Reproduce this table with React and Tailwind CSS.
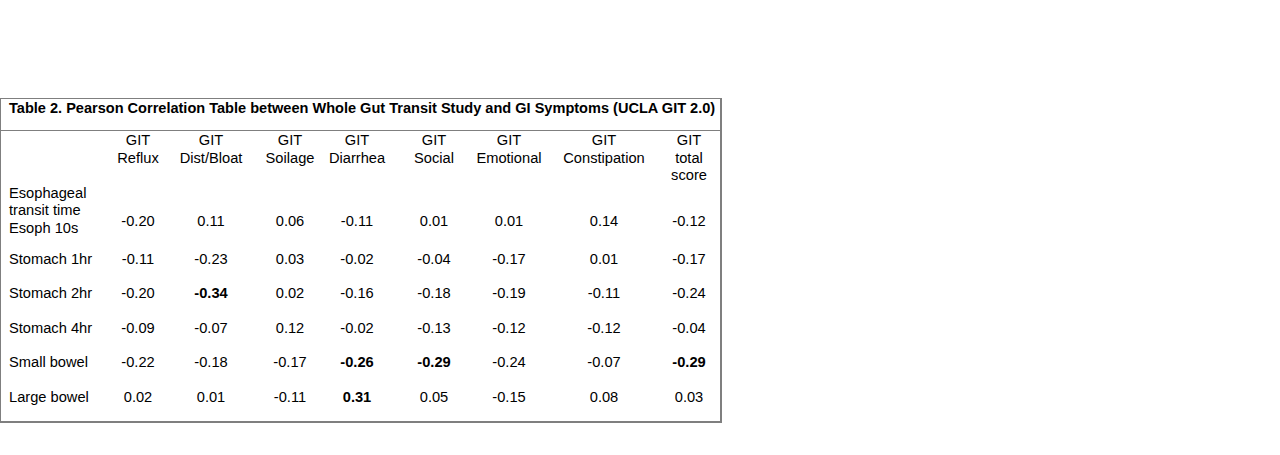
import React from 'react';

const COLS = 'grid grid-cols-[103px_68px_78px_80px_54px_100px_50px_140px_30px_1fr]';

const HEADERS = [
  ['GIT', 'Reflux'],
  ['GIT', 'Dist/Bloat'],
  ['GIT', 'Soilage'],
  ['GIT', 'Diarrhea'],
  ['GIT', 'Social'],
  ['GIT', 'Emotional'],
  ['GIT', 'Constipation'],
  ['GIT', 'total', 'score'],
];

// values marked with * are bold
const ROWS = [
  { label: ['Stomach 1hr'], values: ['-0.11', '-0.23', '0.03', '-0.02', '-0.04', '-0.17', '0.01', '-0.17'] },
  { label: ['Stomach 2hr'], values: ['-0.20', '*-0.34', '0.02', '-0.16', '-0.18', '-0.19', '-0.11', '-0.24'] },
  { label: ['Stomach 4hr'], values: ['-0.09', '-0.07', '0.12', '-0.02', '-0.13', '-0.12', '-0.12', '-0.04'] },
  { label: ['Small bowel'], values: ['-0.22', '-0.18', '-0.17', '*-0.26', '*-0.29', '-0.24', '-0.07', '*-0.29'] },
  { label: ['Large bowel'], values: ['0.02', '0.01', '-0.11', '*0.31', '0.05', '-0.15', '0.08', '0.03'] },
];

const ESOPH = ['-0.20', '0.11', '0.06', '-0.11', '0.01', '0.01', '0.14', '-0.12'];

const Value = ({ v }) => {
  const bold = v.startsWith('*');
  return <span className={bold ? 'font-bold' : ''}>{bold ? v.slice(1) : v}</span>;
};

export default function App() {
  return (
    <div className="w-[1280px] h-[455px] bg-white pt-[98px] text-black font-['Liberation_Sans',Arial,sans-serif]">
      <div className="w-[722px] border-l border-t border-r-2 border-b-2 border-[#7f7f7f]">
        <div className="h-[32px] border-b border-[#7f7f7f] pl-[8px] pt-px text-[14.55px] font-bold leading-[17px] whitespace-nowrap">
          Table 2. Pearson Correlation Table between Whole Gut Transit Study and GI Symptoms (UCLA GIT 2.0)
        </div>

        <div className="text-[14.67px] leading-[17.5px]">
          <div className={`${COLS} pt-px`}>
            <div />
            {HEADERS.map((h, i) => (
              <div key={i} className="flex flex-col items-center whitespace-nowrap">
                {h.map((line, j) => (
                  <span key={j}>{line}</span>
                ))}
              </div>
            ))}
          </div>

          <div className={`${COLS} h-[57.5px]`}>
            <div className="pl-[8px] whitespace-nowrap">
              <div>Esophageal</div>
              <div>transit time</div>
              <div>Esoph 10s</div>
            </div>
            {ESOPH.map((v, i) => (
              <div key={i} className="flex justify-center pt-[28px] whitespace-nowrap">
                <Value v={v} />
              </div>
            ))}
          </div>

          {ROWS.map((row) => (
            <div key={row.label[0]} className={`${COLS} h-[34.5px] items-center`}>
              <div className="pl-[8px] whitespace-nowrap">{row.label[0]}</div>
              {row.values.map((v, i) => (
                <div key={i} className="flex justify-center whitespace-nowrap">
                  <Value v={v} />
                </div>
              ))}
            </div>
          ))}
          <div className="h-[6px]" />
        </div>
      </div>
    </div>
  );
}
